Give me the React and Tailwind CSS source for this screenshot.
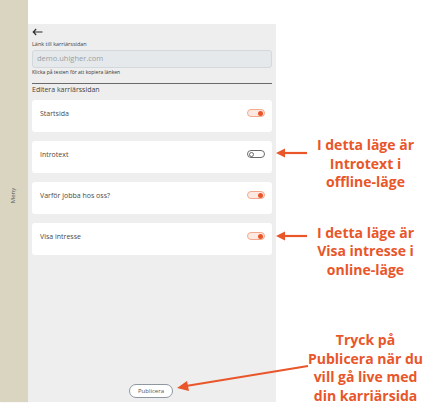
import React from "react";

const font = { fontFamily: '"Open Sans", "Liberation Sans", sans-serif' };

function Toggle({ on }) {
  return on ? (
    <div className="flex h-[8px] w-[18px] items-center justify-end rounded-full border border-[#f3a98c] bg-[#fde9e1] pr-[1px]">
      <div className="h-[5px] w-[5px] rounded-full bg-[#e8562a]" />
    </div>
  ) : (
    <div className="flex h-[8px] w-[18px] items-center justify-start rounded-full border border-[#6b6b6b] bg-white pl-[1px]">
      <div className="h-[5px] w-[5px] rounded-full border border-[#6b6b6b]" />
    </div>
  );
}

function Card({ label, on }) {
  return (
    <div className="flex h-[32px] items-start justify-between rounded-[3px] bg-white pl-[8px] pr-[7px] pt-[8px]">
      <span className="pt-[1px] text-[7px] leading-[9px] text-[#4a4a4a]">{label}</span>
      <div className="pt-[1px]">
        <Toggle on={on} />
      </div>
    </div>
  );
}

function Arrow({ className }) {
  return (
    <svg className={`shrink-0 ${className}`} width="31" height="10" viewBox="0 0 31 10">
      <line x1="7" y1="5" x2="31" y2="5" stroke="#e8562a" strokeWidth="2.2" />
      <polygon points="0,5 9,0.5 9,9.5" fill="#e8562a" />
    </svg>
  );
}

function Note({ lines }) {
  return (
    <div className="w-[117px] shrink-0 text-center text-[14px] font-bold leading-[18.5px] text-[#e8562a]">
      {lines.map((l) => (
        <div key={l}>{l}</div>
      ))}
    </div>
  );
}

export default function App() {
  return (
    <div className="relative flex h-[413px] w-[424px] bg-white" style={font}>
      <div className="flex h-[402px] w-[28px] shrink-0 items-center justify-center bg-[#d9d5c1] pb-[12px] shadow-[1px_0_2px_rgba(0,0,0,0.08)]">
        <span className="-rotate-90 text-[6px] text-[#555]">Meny</span>
      </div>
      <div className="flex w-[248px] shrink-0 flex-col">
        <div className="h-[24px] bg-white" />
        <div className="flex h-[378px] flex-col bg-[#eeeeee] px-[4px]">
          <div className="mt-[3px] flex h-[10px] items-center">
            <svg width="11" height="8" viewBox="0 0 11 8">
              <path d="M10.5 4H1.2M4.2 1 1.2 4l3 3" fill="none" stroke="#2b2b2b" strokeWidth="1.1" />
            </svg>
          </div>
          <div className="mt-[4px] text-[5.5px] leading-[7px] text-[#444]">Länk till karriärssidan</div>
          <div className="mt-[2px] flex h-[18px] items-center rounded-[3px] border border-[#d3d8dc] bg-[#e5e9ec] px-[4px] text-[7.5px] text-[#9a9fa3]">
            demo.uhigher.com
          </div>
          <div className="mt-[1px] text-[5px] leading-[7px] text-[#333]">Klicka på texten för att kopiera länken</div>
          <div className="mt-[7px] h-px bg-[#6a6a6a]" />
          <div className="mt-[1px] text-[7px] leading-[10px] text-[#444]">Editera karriärssidan</div>
          <div className="mt-[5px] flex flex-col gap-[9px]">
            <Card label="Startsida" on />
            <Card label="Introtext" on={false} />
            <Card label="Varför jobba hos oss?" on />
            <Card label="Visa intresse" on />
          </div>
          <div className="flex flex-1 items-end justify-center pb-[4px]">
            <div className="ml-[-2px] flex h-[14px] items-center rounded-full border border-[#8f98a0] bg-white px-[8px] text-[6px] text-[#555]">
              Publicera
            </div>
          </div>
        </div>
      </div>
      <div className="flex w-[148px] shrink-0 flex-col">
        <div className="mt-[136px] flex items-start">
          <Arrow className="mt-[12px]" />
          <Note lines={["I detta läge är", "Introtext i", "offline-läge"]} />
        </div>
        <div className="mt-[32px] flex items-start">
          <Arrow className="mt-[7px]" />
          <Note lines={["I detta läge är", "Visa intresse i", "online-läge"]} />
        </div>
        <div className="mt-[52px] ml-[31px]">
          <Note lines={["Tryck på", "Publicera när du", "vill gå live med", "din karriärsida"]} />
        </div>
      </div>
      <svg className="absolute left-[174px] top-[362px]" width="136" height="32" viewBox="0 0 136 32">
        <line x1="12" y1="24" x2="134" y2="4" stroke="#e8562a" strokeWidth="2.2" />
        <polygon points="3,26 13,19 15,29" fill="#e8562a" />
      </svg>
    </div>
  );
}
